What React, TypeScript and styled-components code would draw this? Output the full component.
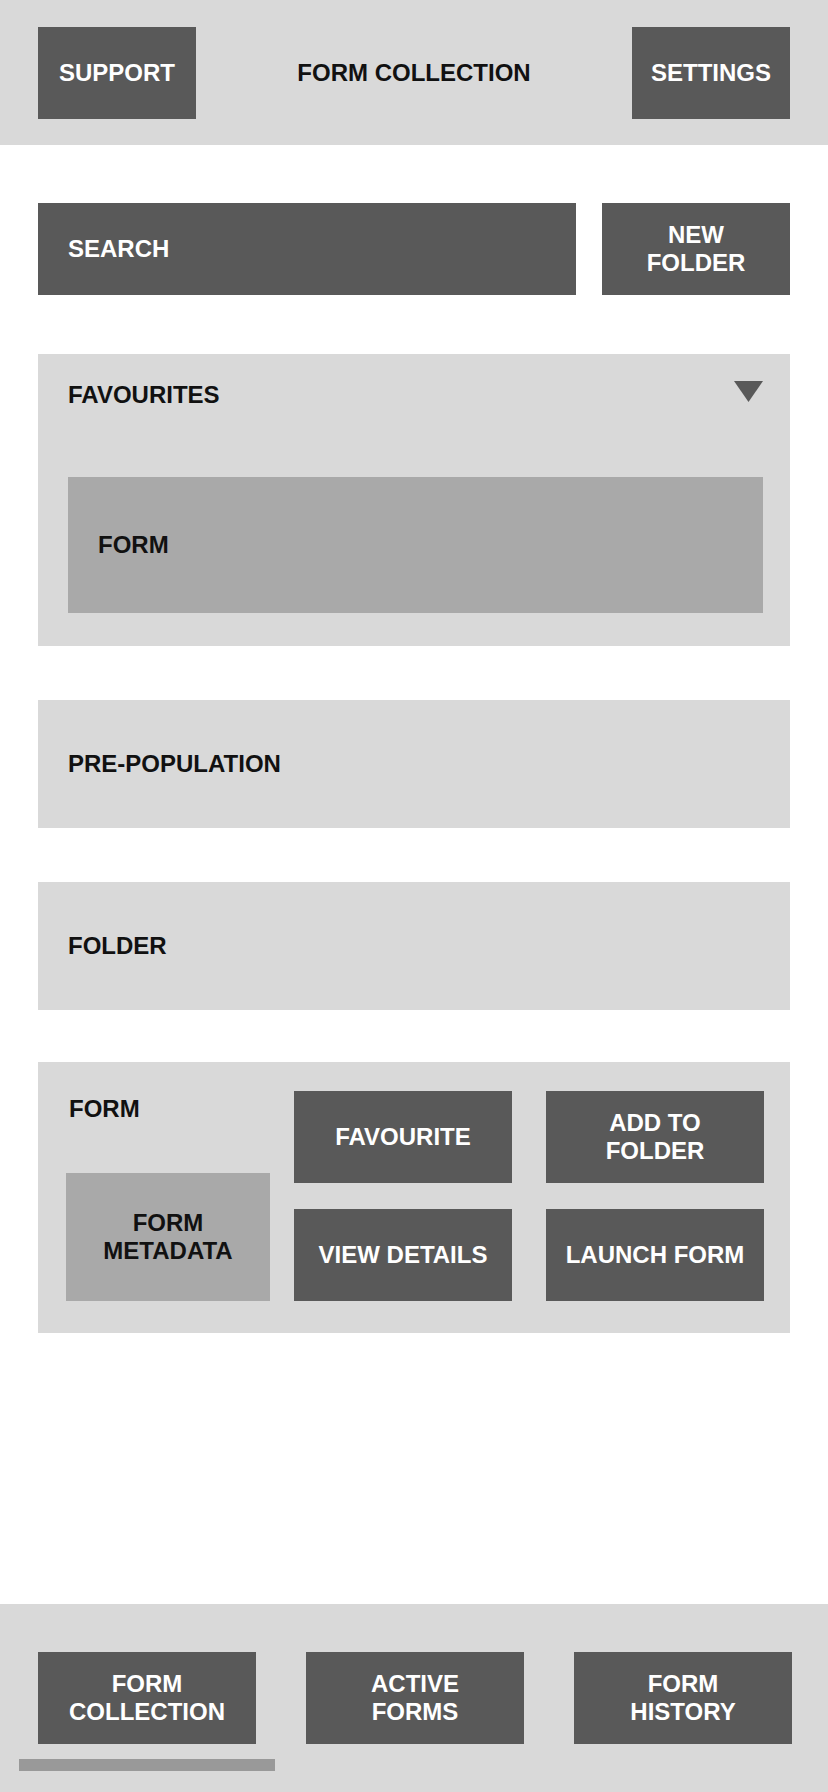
import React from 'react'
import styled, { createGlobalStyle } from 'styled-components'

const GlobalStyle = createGlobalStyle`
	html, body {
		margin: 0;
		padding: 0;
		background: #ffffff;
	}
	body {
		font-family: 'Liberation Sans', Arial, sans-serif;
	}
	* {
		box-sizing: border-box;
	}
`

const Page = styled.div`
	display: flex;
	flex-direction: column;
	min-height: 100vh;
	font-weight: 700;
	font-size: 24px;
	line-height: 28px;
	color: #111111;
`

const Header = styled.header`
	display: flex;
	align-items: center;
	justify-content: space-between;
	height: 145px;
	padding: 0 38px;
	background: #d9d9d9;
`

const Title = styled.h1`
	margin: 0;
	font-size: 24px;
	line-height: 28px;
	font-weight: 700;
	color: #111111;
`

const DarkButton = styled.button<{ $w?: number }>`
	display: flex;
	align-items: center;
	justify-content: center;
	flex: none;
	width: ${p => (p.$w ? `${p.$w}px` : 'auto')};
	height: 92px;
	padding: 0 10px;
	border: none;
	border-radius: 0;
	background: #595959;
	color: #ffffff;
	font-family: inherit;
	font-size: 24px;
	line-height: 28px;
	font-weight: 700;
	text-align: center;
	cursor: pointer;
`

const Main = styled.main`
	display: flex;
	flex-direction: column;
	gap: 54px;
	padding: 58px 38px 0;
`

const SearchRow = styled.div`
	display: flex;
	gap: 26px;
	margin-bottom: 5px;
`

const SearchBar = styled.div`
	display: flex;
	align-items: center;
	flex: 1;
	height: 92px;
	padding-left: 30px;
	background: #595959;
	color: #ffffff;
`

const Panel = styled.section`
	background: #d9d9d9;
`

const AccordionPanel = styled(Panel)`
	display: flex;
	flex-direction: column;
	gap: 68px;
	padding: 27px 27px 33px 30px;
`

const AccordionHead = styled.div`
	display: flex;
	justify-content: space-between;
	align-items: flex-start;
`

const Arrow = styled.svg`
	display: block;
`

const FormRow = styled.div`
	display: flex;
	align-items: center;
	height: 136px;
	padding-left: 30px;
	background: #a9a9a9;
`

const CollapsedPanel = styled(Panel)`
	display: flex;
	align-items: center;
	height: 128px;
	padding-left: 30px;
`

const FormCard = styled(Panel)`
	display: flex;
	gap: 24px;
	margin-top: -2px;
	padding: 29px 26px 32px 28px;
`

const CardInfo = styled.div`
	display: flex;
	flex-direction: column;
	justify-content: space-between;
	width: 204px;
`

const CardLabel = styled.div`
	padding: 4px 0 0 3px;
`

const Metadata = styled.div`
	display: flex;
	align-items: center;
	justify-content: center;
	height: 128px;
	background: #a9a9a9;
	text-align: center;
`

const ActionGrid = styled.div`
	display: grid;
	grid-template-columns: 218px 218px;
	column-gap: 34px;
	row-gap: 26px;
`

const Footer = styled.footer`
	display: flex;
	flex-direction: column;
	margin-top: auto;
	height: 188px;
	padding-top: 48px;
	background: #d9d9d9;
`

const TabRow = styled.nav`
	display: flex;
	gap: 50px;
	padding-left: 38px;
`

const HomeBar = styled.div`
	width: 256px;
	height: 12px;
	margin: 15px 0 0 19px;
	background: #999999;
`

export default function App() {
	return (
		<>
			<GlobalStyle />
			<Page>
				<Header>
					<DarkButton $w={158}>SUPPORT</DarkButton>
					<Title>FORM COLLECTION</Title>
					<DarkButton $w={158}>SETTINGS</DarkButton>
				</Header>

				<Main>
					<SearchRow>
						<SearchBar>SEARCH</SearchBar>
						<DarkButton $w={188}>
							NEW
							<br />
							FOLDER
						</DarkButton>
					</SearchRow>

					<AccordionPanel>
						<AccordionHead>
							<span>FAVOURITES</span>
							<Arrow width="29" height="21" viewBox="0 0 29 21">
								<polygon points="0,0 29,0 14.5,21" fill="#595959" />
							</Arrow>
						</AccordionHead>
						<FormRow>FORM</FormRow>
					</AccordionPanel>

					<CollapsedPanel>PRE-POPULATION</CollapsedPanel>
					<CollapsedPanel>FOLDER</CollapsedPanel>

					<FormCard>
						<CardInfo>
							<CardLabel>FORM</CardLabel>
							<Metadata>
								FORM
								<br />
								METADATA
							</Metadata>
						</CardInfo>
						<ActionGrid>
							<DarkButton $w={218}>FAVOURITE</DarkButton>
							<DarkButton $w={218}>
								ADD TO
								<br />
								FOLDER
							</DarkButton>
							<DarkButton $w={218}>VIEW DETAILS</DarkButton>
							<DarkButton $w={218}>LAUNCH FORM</DarkButton>
						</ActionGrid>
					</FormCard>
				</Main>

				<Footer>
					<TabRow>
						<DarkButton $w={218}>
							FORM
							<br />
							COLLECTION
						</DarkButton>
						<DarkButton $w={218}>
							ACTIVE
							<br />
							FORMS
						</DarkButton>
						<DarkButton $w={218}>
							FORM
							<br />
							HISTORY
						</DarkButton>
					</TabRow>
					<HomeBar />
				</Footer>
			</Page>
		</>
	)
}
